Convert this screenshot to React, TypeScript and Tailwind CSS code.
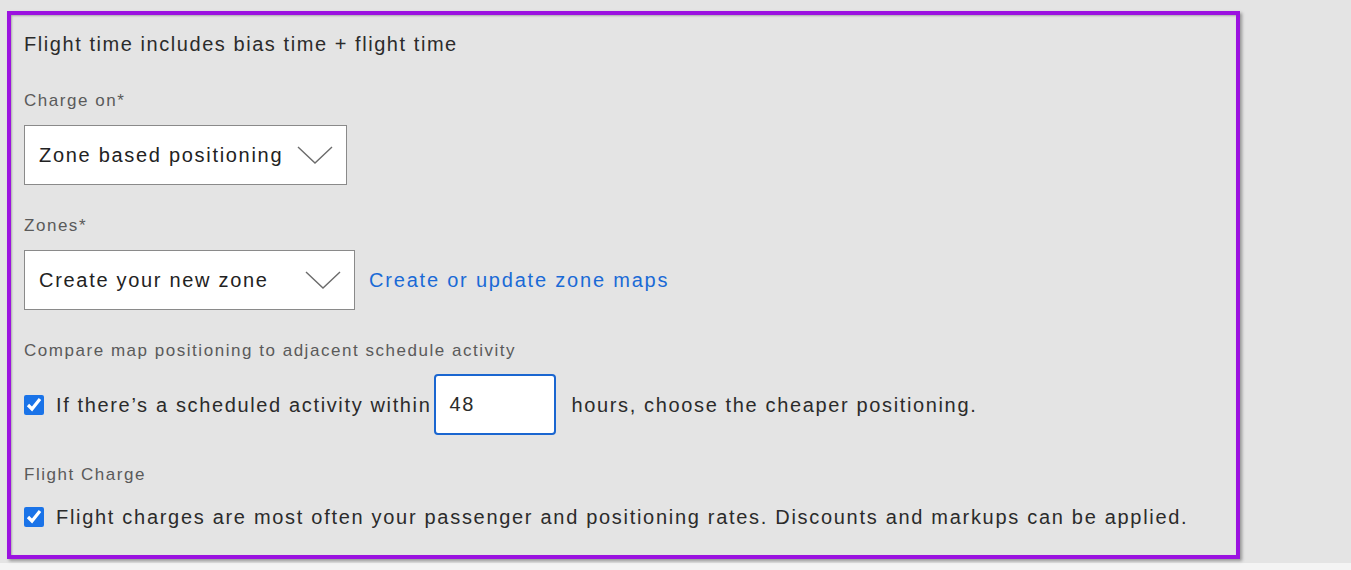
import { useState } from "react";

function Chevron() {
  return (
    <svg width="36" height="18" viewBox="0 0 36 18" className="shrink-0 text-[#6b6b6b]" fill="none">
      <path d="M1 1 L18 17 L35 1" stroke="currentColor" strokeWidth="1.4" />
    </svg>
  );
}

function SelectBox({ value, width }: { value: string; width: string }) {
  return (
    <div className={`flex h-[60px] items-center justify-between border border-[#8a8a8a] bg-white pl-[14px] pr-[13px] ${width}`}>
      <span className="text-[20px] tracking-[0.085em] text-[#222]">{value}</span>
      <Chevron />
    </div>
  );
}

function Check({ checked, onChange }: { checked: boolean; onChange: () => void }) {
  return (
    <input
      type="checkbox"
      checked={checked}
      onChange={onChange}
      className="m-0 h-5 w-5 shrink-0 accent-[#1a73e8]"
    />
  );
}

export default function App() {
  const [compare, setCompare] = useState(true);
  const [charge, setCharge] = useState(true);
  const [hours, setHours] = useState("48");

  return (
    <div className="h-[570px] w-[1351px] bg-[#f4f4f4] font-['Liberation_Sans',Arial,sans-serif]">
      <div className="h-[563px] bg-[#e4e4e4] pl-[7px] pt-[11px]">
        <div className="h-[548px] w-[1233px] border-4 border-[#9b12e0] pl-[13px] pt-[17px] shadow-[2px_2px_3px_rgba(0,0,0,0.35),inset_1px_1px_2px_rgba(0,0,0,0.25)]">
          <p className="text-[20px] leading-[24px] tracking-[0.078em] text-[#2b2b2b]">Flight time includes bias time + flight time</p>

          <p className="mt-[35px] text-[17px] leading-[20px] tracking-[0.09em] text-[#5a5a5a]">Charge on*</p>
          <div className="mt-[14px]">
            <SelectBox value="Zone based positioning" width="w-[323px]" />
          </div>

          <p className="mt-[31px] text-[17px] leading-[20px] tracking-[0.09em] text-[#5a5a5a]">Zones*</p>
          <div className="mt-[14px] flex items-center gap-[14px]">
            <SelectBox value="Create your new zone" width="w-[331px]" />
            <a href="#" className="text-[20px] tracking-[0.09em] text-[#1a6ad6]">Create or update zone maps</a>
          </div>

          <p className="mt-[31px] text-[17px] leading-[20px] tracking-[0.09em] text-[#5a5a5a]">Compare map positioning to adjacent schedule activity</p>
          <div className="mt-[13px] flex items-center">
            <Check checked={compare} onChange={() => setCompare(!compare)} />
            <span className="ml-[12px] text-[20px] tracking-[0.082em] text-[#2b2b2b]">If there’s a scheduled activity within</span>
            <input
              value={hours}
              onChange={(e) => setHours(e.target.value)}
              className="ml-[3px] h-[61px] w-[122px] rounded-[4px] border-2 border-[#1a66d0] bg-white pl-[13px] text-[20px] tracking-[0.082em] text-[#2b2b2b] outline-none"
            />
            <span className="ml-[15px] text-[20px] tracking-[0.082em] text-[#2b2b2b]">hours, choose the cheaper positioning.</span>
          </div>

          <p className="mt-[30px] text-[17px] leading-[20px] tracking-[0.09em] text-[#5a5a5a]">Flight Charge</p>
          <div className="mt-[20px] flex items-center">
            <Check checked={charge} onChange={() => setCharge(!charge)} />
            <span className="ml-[12px] text-[20px] leading-[24px] tracking-[0.085em] text-[#2b2b2b]">
              Flight charges are most often your passenger and positioning rates. Discounts and markups can be applied.
            </span>
          </div>
        </div>
      </div>
    </div>
  );
}
